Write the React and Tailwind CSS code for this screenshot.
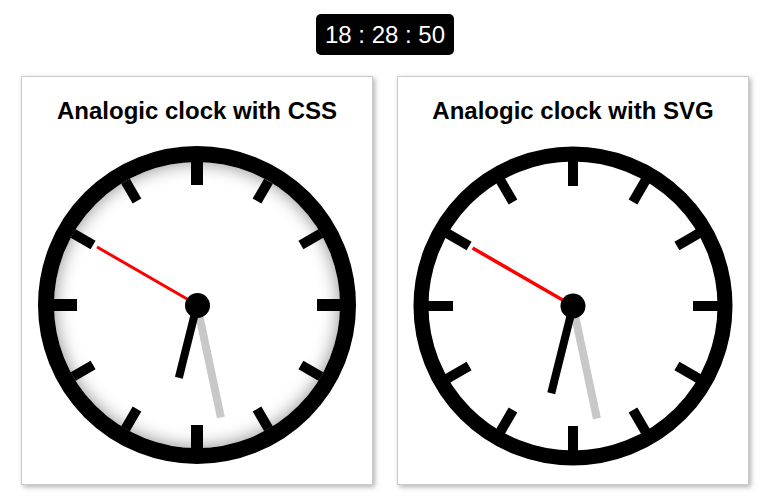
import React from 'react';

const time = { h: 18, m: 28, s: 50 };
const hourDeg = ((time.h % 12) + time.m / 60) * 30;
const minDeg = time.m * 6;
const secDeg = time.s * 6;
const pad = (n) => String(n).padStart(2, '0');

const Card = ({ title, children }) => (
  <div className="w-[352px] h-[409px] bg-white border border-[#cccccc] shadow-[2px_2px_5px_rgba(0,0,0,0.3)] flex flex-col items-center pt-[20px]">
    <h2 className="text-[24px] leading-[28px] font-bold text-black">{title}</h2>
    <div className="mt-[21px]">{children}</div>
  </div>
);

const CssClock = () => {
  const ticks = Array.from({ length: 12 }, (_, i) => i);
  return (
    <div className="relative w-[318px] h-[318px] rounded-full border-[16px] border-black bg-white shadow-[inset_0_0_18px_rgba(0,0,0,0.45)]">
      {ticks.map((i) => {
        const major = i % 3 === 0;
        return (
          <div
            key={i}
            className={
              major
                ? 'absolute top-0 left-1/2 w-[12px] -ml-[6px] h-[23px] bg-black origin-[50%_143px]'
                : 'absolute top-0 left-1/2 w-[10px] -ml-[5px] h-[23px] bg-black origin-[50%_143px]'
            }
            style={{ transform: `rotate(${i * 30}deg)` }}
          />
        );
      })}
      <div
        className="absolute left-1/2 bottom-1/2 w-[8px] -ml-[4px] h-[115px] bg-[#c8c8c8] origin-bottom"
        style={{ transform: `rotate(${minDeg}deg)` }}
      />
      <div
        className="absolute left-1/2 bottom-1/2 w-[8px] -ml-[4px] h-[75px] bg-black origin-bottom"
        style={{ transform: `rotate(${hourDeg}deg)` }}
      />
      <div
        className="absolute left-1/2 bottom-1/2 w-[3px] -ml-[1.5px] h-[116px] bg-[#ff0000] origin-bottom"
        style={{ transform: `rotate(${secDeg}deg)` }}
      />
      <div className="absolute left-1/2 top-1/2 w-[25px] h-[25px] -ml-[12.5px] -mt-[12.5px] rounded-full bg-black" />
    </div>
  );
};

const SvgClock = () => {
  const ticks = Array.from({ length: 12 }, (_, i) => i);
  return (
    <svg width="320" height="320" viewBox="0 0 320 320" className="block">
      <circle cx="160" cy="160" r="152" fill="#fff" stroke="#000" strokeWidth="15" />
      {ticks.map((i) => (
        <rect key={i} x="155" y="15" width="10" height="25" fill="#000" transform={`rotate(${i * 30} 160 160)`} />
      ))}
      <line x1="160" y1="160" x2="160" y2="45" stroke="#c8c8c8" strokeWidth="8" transform={`rotate(${minDeg} 160 160)`} />
      <line x1="160" y1="160" x2="160" y2="70" stroke="#000" strokeWidth="8" transform={`rotate(${hourDeg} 160 160)`} />
      <line x1="160" y1="160" x2="160" y2="44" stroke="#ff0000" strokeWidth="3.5" transform={`rotate(${secDeg} 160 160)`} />
      <circle cx="160" cy="160" r="12.5" fill="#000" />
    </svg>
  );
};

export default function App() {
  return (
    <div className="min-h-[499px] w-full bg-white font-['Liberation_Sans',Arial,sans-serif] flex flex-col items-center pt-[14px]">
      <div className="bg-black text-white rounded-[5px] px-[9px] py-[6px] text-[24px] leading-[29px]">
        {pad(time.h)} : {pad(time.m)} : {pad(time.s)}
      </div>
      <div className="flex gap-[24px] mt-[21px]">
        <Card title="Analogic clock with CSS">
          <CssClock />
        </Card>
        <Card title="Analogic clock with SVG">
          <SvgClock />
        </Card>
      </div>
    </div>
  );
}
